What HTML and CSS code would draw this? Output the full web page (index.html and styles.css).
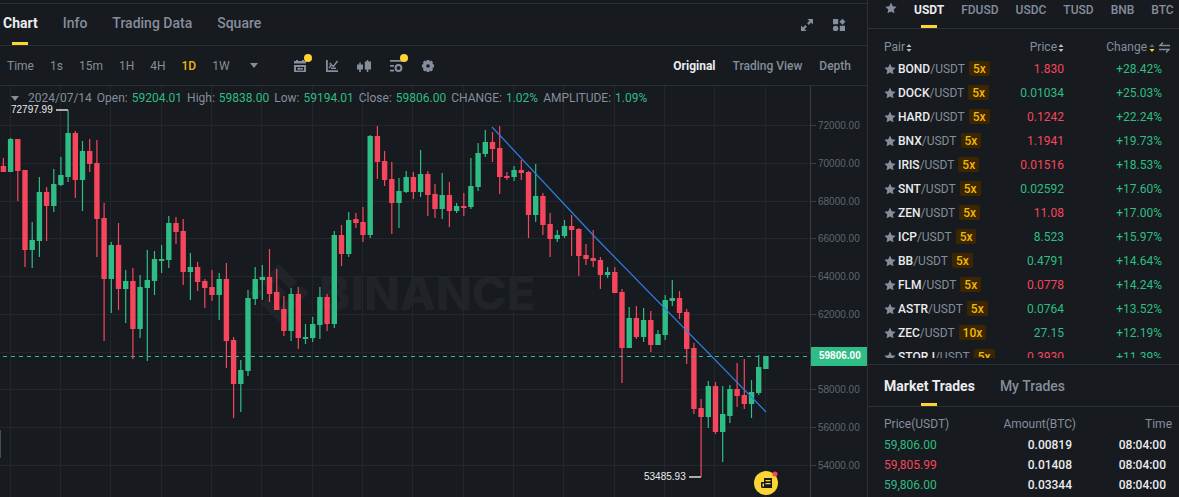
FILE: index.html
```html
<!DOCTYPE html>
<html lang="en">
<head>
<meta charset="utf-8">
<title>BTC/USDT Spot Trading</title>
<link rel="stylesheet" href="styles.css">
</head>
<body>
<svg class="defs" width="0" height="0" aria-hidden="true">
  <symbol id="star" viewBox="0 0 12 12"><path d="M6 .6l1.7 3.6 3.9.5-2.9 2.7.8 3.9L6 9.4l-3.5 1.9.8-3.9L.4 4.700l3.900-.5z"/></symbol>
  <symbol id="sort" viewBox="0 0 6 8"><path class="up" d="M3 0l2.500 3h-5z"/><path class="down" d="M3 8L.5 5h5z"/></symbol>
</svg>
<div class="app">
  <main class="chart-panel">
    <header class="chart-tabs">
      <nav class="tabs tabs-main">
        <button class="tab active">Chart</button>
        <button class="tab">Info</button>
        <button class="tab">Trading Data</button>
        <button class="tab">Square</button>
      </nav>
      <div class="window-tools">
        <button class="icon-btn" aria-label="Full screen"><svg viewBox="0 0 12 12"><path d="M6.500 0H12v5.500L10 3.600 7.700 5.900 6.100 4.300 8.400 2zM5.500 12H0V6.500l2 1.900 2.300-2.300 1.600 1.600L3.600 10z"/></svg></button>
        <button class="icon-btn" aria-label="Layout"><svg viewBox="0 0 12 12"><path d="M0 0h5.200v5.200H0zM6.800 6.800H12V12H6.800zM9.400-.3l3 3-3 3-3-3z"/><circle cx="2.600" cy="9.400" r="2.700"/></svg></button>
      </div>
    </header>
    <div class="toolbar">
      <div class="intervals">
        <button>Time</button><button>1s</button><button>15m</button><button>1H</button><button>4H</button><button class="active">1D</button><button>1W</button>
        <button class="more" aria-label="More intervals"><svg viewBox="0 0 8 5"><path d="M0 0h8L4 5z"/></svg></button>
      </div>
      <div class="chart-tools">
        <button class="icon-btn dot" aria-label="Calendar"><svg viewBox="0 0 12 12"><path fill-rule="evenodd" d="M0 1h2V0h2v1h4V0h2v1h2v2.500H0zM0 5h12v7H0zM2 7v3.500h8V7z"/><path d="M3 8.700L5.200 7v1H9v1.500H5.200v1z"/></svg></button>
        <button class="icon-btn" aria-label="Indicators"><svg viewBox="0 0 12 12"><path d="M0 0h1.800v10.200H12V12H0z"/><path d="M3 8L5.500 5l2 1.300L11.500 1M3.500 4.500L5 3M5 8.300h5" fill="none" stroke="currentColor" stroke-width="1.500"/></svg></button>
        <button class="icon-btn wide" aria-label="Chart type"><svg viewBox="0 0 14 12"><path d="M2.200 2.500h1.600v2H6v5H3.800V12H2.200V9.500H0v-5h2.200zM9.700 0h1.600v1.500H14v8h-2.700V12H9.700V9.500H7.800v-8h1.900z"/></svg></button>
        <button class="icon-btn dot" aria-label="Chart settings"><svg viewBox="0 0 12 12"><path d="M0 0h12v1.800H0zM0 5h4v1.700H0zM0 9.700h4v1.700H0z"/><circle cx="8.500" cy="8" r="2.900" fill="none" stroke="currentColor" stroke-width="2"/></svg></button>
        <button class="icon-btn" aria-label="Preferences"><svg viewBox="0 0 12 12"><path fill-rule="evenodd" d="M4.800 0h2.400l.4 1.400 1.500-.8 2 2-.8 1.300 1.700.6v2.800l-1.700.6.8 1.500-2 2-1.500-.8-.4 1.400H4.800l-.5-1.400-1.500.8-2-2 .8-1.500L0 7.300V4.500l1.600-.6L.8 2.600l2-2 1.500.8zM6 4.200a1.800 1.800 0 100 3.600 1.800 1.800 0 000-3.600z"/></svg></button>
      </div>
      <div class="views">
        <button class="active">Original</button><button>Trading View</button><button>Depth</button>
      </div>
    </div>
    <section class="chart">
      <svg class="plot" id="plot" viewBox="0 86 867 411" role="img" aria-label="BTC/USDT daily candles"></svg>
      <div class="ohlc">
        <svg class="caret" viewBox="0 0 8 5"><path d="M0 0h8L4 5z"/></svg>
        <span>2024/07/14</span>
        <span>Open: <b>59204.01</b></span>
        <span>High: <b>59838.00</b></span>
        <span>Low: <b>59194.01</b></span>
        <span>Close: <b>59806.00</b></span>
        <span>CHANGE: <b>1.02%</b></span>
        <span>AMPLITUDE: <b>1.09%</b></span>
      </div>
    </section>
  </main>
  <aside class="side">
    <nav class="tabs quotes">
      <button class="fav" aria-label="Favorites"><svg class="star"><use href="#star"/></svg></button>
      <button class="tab active">USDT</button><button class="tab">FDUSD</button><button class="tab">USDC</button><button class="tab">TUSD</button><button class="tab">BNB</button><button class="tab">BTC</button>
    </nav>
    <div class="pairs">
      <table>
        <thead><tr>
          <th>Pair<svg class="sort"><use href="#sort"/></svg></th>
          <th>Price<svg class="sort"><use href="#sort"/></svg></th>
          <th>Change<svg class="sort desc" viewBox="0 0 6 8"><path class="up" d="M3 0l2.500 3h-5z"/><path class="down" d="M3 8L.5 5h5z"/></svg><svg class="swap" viewBox="0 0 11 11"><path d="M11 3.500H1L4 .5M0 7.500h10l-3 3" fill="none" stroke="currentColor" stroke-width="1.300"/></svg></th>
        </tr></thead>
        <tbody>
          <tr><td><svg class="star"><use href="#star"/></svg><b>BOND</b>/USDT<i>5x</i></td><td class="down">1.830</td><td>+28.42%</td></tr>
          <tr><td><svg class="star"><use href="#star"/></svg><b>DOCK</b>/USDT<i>5x</i></td><td>0.01034</td><td>+25.03%</td></tr>
          <tr><td><svg class="star"><use href="#star"/></svg><b>HARD</b>/USDT<i>5x</i></td><td class="down">0.1242</td><td>+22.24%</td></tr>
          <tr><td><svg class="star"><use href="#star"/></svg><b>BNX</b>/USDT<i>5x</i></td><td class="down">1.1941</td><td>+19.73%</td></tr>
          <tr><td><svg class="star"><use href="#star"/></svg><b>IRIS</b>/USDT<i>5x</i></td><td class="down">0.01516</td><td>+18.53%</td></tr>
          <tr><td><svg class="star"><use href="#star"/></svg><b>SNT</b>/USDT<i>5x</i></td><td>0.02592</td><td>+17.60%</td></tr>
          <tr><td><svg class="star"><use href="#star"/></svg><b>ZEN</b>/USDT<i>5x</i></td><td class="down">11.08</td><td>+17.00%</td></tr>
          <tr><td><svg class="star"><use href="#star"/></svg><b>ICP</b>/USDT<i>5x</i></td><td>8.523</td><td>+15.97%</td></tr>
          <tr><td><svg class="star"><use href="#star"/></svg><b>BB</b>/USDT<i>5x</i></td><td>0.4791</td><td>+14.64%</td></tr>
          <tr><td><svg class="star"><use href="#star"/></svg><b>FLM</b>/USDT<i>5x</i></td><td class="down">0.0778</td><td>+14.24%</td></tr>
          <tr><td><svg class="star"><use href="#star"/></svg><b>ASTR</b>/USDT<i>5x</i></td><td>0.0764</td><td>+13.52%</td></tr>
          <tr><td><svg class="star"><use href="#star"/></svg><b>ZEC</b>/USDT<i>10x</i></td><td>27.15</td><td>+12.19%</td></tr>
          <tr><td><svg class="star"><use href="#star"/></svg><b>STORJ</b>/USDT<i>5x</i></td><td class="down">0.3930</td><td>+11.39%</td></tr>
        </tbody>
      </table>
    </div>
    <nav class="tabs trade-tabs">
      <button class="tab active">Market Trades</button><button class="tab">My Trades</button>
    </nav>
    <div class="trades">
      <table>
        <thead><tr><th>Price(USDT)</th><th>Amount(BTC)</th><th>Time</th></tr></thead>
        <tbody>
          <tr><td>59,806.00</td><td>0.00819</td><td>08:04:00</td></tr>
          <tr><td class="down">59,805.99</td><td>0.01408</td><td>08:04:00</td></tr>
          <tr><td>59,806.00</td><td>0.03344</td><td>08:04:00</td></tr>
        </tbody>
      </table>
    </div>
  </aside>
</div>
<script src="chart.js"></script>
</body>
</html>
```
FILE: styles.css
```css
:root {
  --bg: #171a1e;
  --line: #2b2f36;
  --muted: #848e9c;
  --text: #eaecef;
  --up: #2ebd85;
  --down: #f6465d;
  --accent: #fcd535;
}
* { box-sizing: border-box; }
body {
  margin: 0;
  background: var(--bg);
  color: var(--muted);
  font: 12px/16px Roboto, "Liberation Sans", sans-serif;
}
button {
  padding: 0;
  border: 0;
  background: none;
  color: inherit;
  font: inherit;
  white-space: nowrap;
  cursor: pointer;
}
svg { fill: currentColor; }
.defs { position: absolute; }

.app { display: flex; height: 100vh; overflow: hidden; }
.chart-panel {
  flex: 1;
  min-width: 0;
  display: flex;
  flex-direction: column;
  padding-top: 3px;
  border-right: 1px solid var(--line);
}
.side { flex: 0 0 311px; display: flex; flex-direction: column; }

.tabs { display: flex; }
.tab { position: relative; font-weight: 500; }
.tab.active { color: var(--text); font-weight: 700; }
.tab.active::after {
  content: "";
  position: absolute;
  bottom: 0;
  left: 50%;
  width: 16px;
  height: 3px;
  margin-left: -8px;
  background: var(--accent);
}

.chart-tabs {
  display: flex;
  justify-content: space-between;
  height: 43px;
  border: solid var(--line);
  border-width: 1px 0;
}
.tabs-main { gap: 25px; padding-left: 3px; font-size: 14px; }
.tabs-main .tab { padding-bottom: 4px; }
.window-tools { display: flex; align-items: center; gap: 20px; padding-right: 22px; padding-top: 1px; }
.icon-btn { position: relative; display: block; width: 12px; height: 12px; }
.icon-btn svg { display: block; width: 100%; height: 100%; overflow: visible; }
.icon-btn.wide { width: 14px; margin: 0 -1px; }
.icon-btn.dot::after {
  content: "";
  position: absolute;
  top: -6px;
  right: -6px;
  width: 8px;
  height: 8px;
  border-radius: 50%;
  background: var(--accent);
}

.toolbar {
  display: flex;
  align-items: center;
  height: 40px;
  border-bottom: 1px solid var(--line);
}
.intervals { display: flex; align-items: center; gap: 16px; padding-left: 7px; }
.intervals .active { color: #f0b90b; font-weight: 500; }
.more { margin-left: 4px; }
.more svg { display: block; width: 8px; height: 5px; }
.chart-tools { display: flex; gap: 20px; margin-left: 36px; }
.views { display: flex; gap: 17px; margin-left: auto; padding-right: 16px; font-weight: 500; }
.views .active { color: var(--text); font-weight: 700; }

.chart { position: relative; flex: 1; min-height: 0; }
.plot { display: block; width: 100%; }
.plot text { font: 10px "Liberation Sans", Arial, sans-serif; }
.plot .grid { stroke: #23272c; }
.plot .axis { stroke: #3a3f47; }
.plot .axis-label { fill: #5e6673; }
.plot .mark { fill: var(--text); }
.plot .mark-line { stroke: #a9adb3; stroke-width: 2; }
.plot .watermark { fill: #202327; }
.plot .watermark text { font: 800 47px Inter, sans-serif; }
.plot .up { fill: var(--up); }
.plot .down { fill: var(--down); }
.plot .last { stroke: var(--up); stroke-dasharray: 4 4; }
.plot .last-label { fill: #fff; font-weight: 700; }
.plot .trend { fill: none; stroke: #2f7fe6; stroke-width: 1.2; }
.plot .edge { fill: #474d57; }
.ohlc {
  position: absolute;
  top: 4px;
  left: 11px;
  display: flex;
  align-items: center;
  gap: 5px;
  white-space: nowrap;
}
.ohlc b { color: var(--up); font-weight: 400; margin-left: 1px; }
.caret { width: 8px; height: 5px; margin-right: 4px; }

.quotes {
  flex: none;
  gap: 17px;
  height: 29px;
  padding-left: 17px;
  border-bottom: 1px solid var(--line);
}
.quotes button { padding-bottom: 9px; }
.quotes .fav { width: 12px; padding-bottom: 12px; }
.star { width: 12px; height: 12px; flex: none; vertical-align: -2px; }

table { width: 100%; border-collapse: collapse; table-layout: fixed; }
th, td { padding: 0; font-weight: 400; text-align: right; white-space: nowrap; }
th:first-child, td:first-child { text-align: left; }
td { color: var(--up); }
td.down { color: var(--down); }

.pairs { flex: none; height: 335px; padding: 7px 9px 0 16px; overflow: hidden; border-bottom: 6px solid var(--bg); }
.pairs th { height: 21px; }
.pairs th:nth-child(2) { width: 70px; }
.pairs th:nth-child(3) { width: 106px; }
.pairs td { height: 24px; }
.pairs td:first-child { color: var(--muted); }
.pairs td:last-child { padding-right: 8px; }
.pairs b { color: var(--text); font-weight: 500; }
.pairs .star { margin-right: 2px; }
.pairs i {
  margin-left: 4px;
  padding: 1px 4px 0;
  border-radius: 2px;
  background: #3c2601;
  color: #f0b90b;
  font-style: normal;
  font-weight: 500;
}
.sort { width: 6px; height: 8px; margin-left: 1px; color: #b7bdc6; vertical-align: -1px; }
.sort.desc { margin-left: 2px; }
.sort.desc .up { fill: #5e6673; }
.sort.desc .down { fill: var(--accent); }
.swap { width: 11px; height: 11px; margin-left: 4px; vertical-align: -2px; }

.trade-tabs {
  flex: none;
  gap: 25px;
  height: 43px;
  padding-left: 16px;
  border: solid var(--line);
  border-width: 1px 0;
  font-size: 14px;
}
.trades { padding: 6px 7px 0 16px; }
.trades th { height: 22px; }
.trades td { height: 20px; }
.trades td:nth-child(n+2) { color: var(--text); font-weight: 500; }
.trades td:nth-child(2) { padding-right: 4px; }
.trades td:nth-child(3) { padding-right: 6px; }
```
FILE: chart.js
```js
// Each candle: direction, high, body top, body bottom, low (plot coordinates)
const candles = `
d 158 166 172 172|u 138 139 172 172|d 139 139 171 201|d 170 170 250 267|u 222 240 250 268
u 177 192 241 257|d 187 192 206 241|u 169 184 206 212|u 157 175 185 186|u 110 133 177 182
d 131 133 180 198|u 141 151 180 211|d 139 151 164 172|d 140 163 219 257|d 203 218 279 341
u 242 245 279 313|d 223 245 289 310|u 270 281 289 323|d 268 281 329 359|u 275 287 329 338
u 250 280 288 361|u 251 259 281 295|u 245 259 261 273|u 216 223 260 268|d 217 223 232 244
d 219 231 272 285|u 253 267 272 300|d 262 267 282 291|d 279 281 288 308|d 270 287 295 301
u 273 279 295 320|d 263 279 341 368|d 337 340 384 418|u 360 370 384 412|u 290 298 371 376
u 267 279 299 305|u 265 277 280 300|d 249 277 294 302|d 269 292 310 310|d 296 309 331 336
u 288 294 331 341|d 287 294 338 349|u 324 337 339 344|u 317 324 338 342|u 287 297 325 339
d 294 297 324 331|u 231 235 324 328|d 225 235 254 266|u 212 220 254 257|d 213 219 223 228
d 207 222 235 242|u 135 136 235 238|d 126 136 162 179|d 151 161 180 186|d 162 179 203 234
u 178 191 203 228|u 171 177 192 193|d 172 177 192 199|u 150 174 192 197|d 171 174 195 216
d 184 194 209 218|u 173 195 209 219|d 182 195 211 227|u 203 206 211 213|d 193 206 208 216
u 158 186 207 209|u 143 153 187 191|u 130 142 154 157|d 132 142 149 162|d 126 148 177 194
d 172 176 178 180|u 166 170 177 181|d 160 170 173 180|d 171 172 215 238|u 164 196 215 222
d 193 196 225 235|d 213 224 239 257|u 230 235 239 242|u 220 226 236 238|d 215 226 230 256
d 228 229 256 276|d 244 255 259 265|d 230 258 261 267|d 257 260 275 289|u 267 272 275 278
d 267 272 293 293|d 289 292 348 383|u 307 318 348 348|d 306 318 337 339|u 308 320 337 342
d 311 320 345 352|u 330 334 345 345|u 295 300 335 340|u 280 298 301 306|d 291 298 313 319
d 309 312 349 364|d 343 348 409 414|d 399 408 417 477|u 381 386 417 428|d 382 386 432 434
u 386 414 432 462|u 385 389 416 423|d 363 389 396 407|d 359 395 404 409|u 380 392 404 418
u 355 367 393 395|u 356 356 369 369`.trim().split(/[|\n]/).map(row => row.split(' '));

const step = 7.193;
const out = [];

// Watermark
out.push(`<g class="watermark"><path d="M279 264l18 18-7 7-11-11-11 11-7-7zM302 286l7 7-7 7-7-7zM256 286l7 7-7 7-7-7zM279 286l7 7-7 7-7-7zM268 297l11 11 11-11 7 7-18 18-18-18z"/>
<text x="319" y="310">BINANCE</text></g>`);

// Grid and price axis
for (let i = 0; i < 16; i++) {
  const x = Math.round(10.5 + i * step * 7);
  out.push(`<path class="grid" d="M${x - 0.5} 86V497"/>`);
}
for (let i = 0; i < 10; i++) {
  const y = Math.round(126 + i * 37.76);
  out.push(`<path class="grid" d="M0 ${y - 0.5}H810"/>`);
  if (i !== 6) {
    out.push(`<path class="axis" d="M811 ${y - 0.5}H816"/>`);
    out.push(`<text class="axis-label" x="818" y="${y + 3}">${72000 - i * 2000}.00</text>`);
  }
}
out.push('<path class="axis" d="M810.5 86V497"/>');

// Candles
candles.forEach(([dir, high, top, bottom, low], i) => {
  const x = 3.4 + i * step;
  out.push(`<path class="${dir === 'u' ? 'up' : 'down'}" d="M${(x - 0.6).toFixed(1)} ${high}h1.2V${low}h-1.200zM${(x - 2.7).toFixed(1)} ${top}h5.400V${bottom}h-5.400z"/>`);
});

// Last price, trend line and extremes
out.push(`<path class="last" d="M3 356.500H810"/>
<rect class="up" x="811" y="347" width="56" height="19"/>
<text class="last-label" x="819" y="359">59806.00</text>
<path class="trend" d="M492 127L594 236L766 412"/>
<text class="mark" x="11" y="113">72797.99</text><path class="mark-line" d="M56 110H68"/>
<text class="mark" x="644" y="480">53485.93</text><path class="mark-line" d="M689 477H701"/>
<rect class="edge" x="0" y="430" width="1" height="28"/>`);

// News marker
out.push(`<circle cx="766" cy="483" r="12" fill="#fcd535"/><circle cx="775" cy="474" r="2.500" fill="#f6465d"/>
<path fill="#171a1e" fill-rule="evenodd" d="M764 478h8v10h-10l-1-1v-5h3zM765.500 480v1.300h5V480zM765.500 483v1.300h5V483zM762.500 483.500v3h1.500v-3z"/>`);

document.getElementById('plot').innerHTML = out.join('');
```
